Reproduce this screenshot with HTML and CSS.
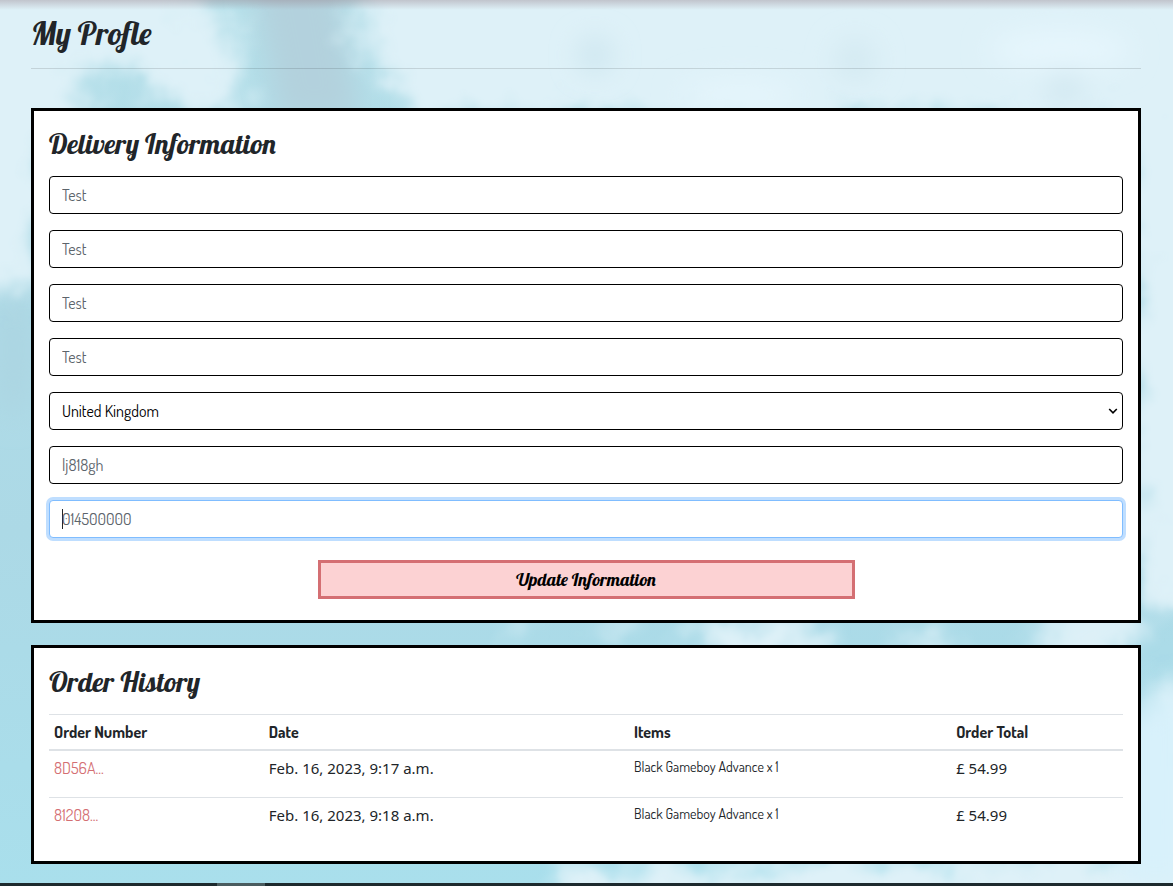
FILE: index.html
```html
<!DOCTYPE html>
<html lang="en">
<head>
<meta charset="utf-8">
<meta name="viewport" content="width=device-width, initial-scale=1">
<title>My Profle</title>
<link rel="stylesheet" href="styles.css">
</head>
<body>
<svg class="sky" viewBox="0 0 1173 886" preserveAspectRatio="none" aria-hidden="true">
  <defs>
    <linearGradient id="base" x1="0" y1="0" x2="0" y2="1">
      <stop offset="0" stop-color="#b4dfe9"/>
      <stop offset="0.6" stop-color="#acd9e6"/>
      <stop offset="1" stop-color="#a9dfec"/>
    </linearGradient>
    <filter id="cloud" x="-10%" y="-10%" width="120%" height="120%">
      <feGaussianBlur stdDeviation="11" result="b"/>
      <feTurbulence type="fractalNoise" baseFrequency="0.022" numOctaves="5" seed="4" result="n"/>
      <feDisplacementMap in="b" in2="n" scale="60" xChannelSelector="R" yChannelSelector="G"/>
      <feGaussianBlur stdDeviation="2"/>
    </filter>
    <filter id="soft" x="-50%" y="-50%" width="200%" height="200%">
      <feGaussianBlur stdDeviation="14"/>
    </filter>
  </defs>
  <rect width="1173" height="886" fill="url(#base)"/>
  <g filter="url(#soft)">
    <path d="M250-30H335L360 120H280Z" fill="#b3d1dd"/>
    <ellipse cx="14" cy="350" rx="20" ry="70" fill="#acd5e2"/>
  </g>
  <g filter="url(#cloud)" fill="#def1f8">
    <path d="M-40-40H180L205 20 240 30 225 55 215 110H180L150 75 125 70H75L90 125H60L40 150 30 290H-40Z"/>
    <ellipse cx="232" cy="85" rx="14" ry="22"/>
    <path d="M370-40H1240V620H1175L1130 560V120H400L400 85 355 40Z"/>
    <path d="M1150 690H1240V940H560V868L1150 850Z"/>
    <ellipse cx="755" cy="640" rx="70" ry="26"/>
    <ellipse cx="1090" cy="635" rx="55" ry="24"/>
    <ellipse cx="925" cy="647" rx="22" ry="14"/>
    <ellipse cx="513" cy="622" rx="10" ry="10"/>
    <ellipse cx="613" cy="622" rx="12" ry="10"/>
  </g>
  <g filter="url(#soft)">
    <ellipse cx="595" cy="55" rx="16" ry="16" fill="#cae4ed"/>
    <ellipse cx="855" cy="60" rx="20" ry="20" fill="#d3e9f1"/>
    <ellipse cx="1060" cy="50" rx="70" ry="20" fill="#e6f6fd"/>
    <ellipse cx="740" cy="95" rx="60" ry="16" fill="#e5f5fc"/>
    <ellipse cx="1065" cy="88" rx="18" ry="14" fill="#cee5ee"/>
    <path d="M1120 886V720L1190 680V886Z" fill="#d8f1fb"/>
  </g>
</svg>
<main class="page">
  <header class="page-header">
    <h1 class="page-title">My Profle</h1>
  </header>

  <section class="panel">
    <h2 class="panel-title">Delivery Information</h2>
    <form class="form">
      <input class="field" type="text" placeholder="Test" aria-label="Street address 1">
      <input class="field" type="text" placeholder="Test" aria-label="Street address 2">
      <input class="field" type="text" placeholder="Test" aria-label="Town or city">
      <input class="field" type="text" placeholder="Test" aria-label="County">
      <div class="select-wrap">
        <select class="field field-select" aria-label="Country">
          <option>United Kingdom</option>
        </select>
        <svg class="chevron" viewBox="0 0 10 10" aria-hidden="true"><path d="M1.2 3 5 6.8 8.8 3"/></svg>
      </div>
      <input class="field" type="text" placeholder="lj818gh" aria-label="Postcode">
      <input class="field" type="text" placeholder="014500000" aria-label="Phone number" autofocus>
      <button class="submit" type="button">Update Information</button>
    </form>
  </section>

  <section class="panel panel-history">
    <h2 class="panel-title">Order History</h2>
    <table class="orders">
      <thead>
        <tr>
          <th class="col-number">Order Number</th>
          <th class="col-date">Date</th>
          <th class="col-items">Items</th>
          <th>Order Total</th>
        </tr>
      </thead>
      <tbody>
        <tr>
          <td><a class="order-link" href="#">8D56A...</a></td>
          <td>Feb. 16, 2023, 9:17 a.m.</td>
          <td><ul class="items"><li>Black Gameboy Advance x 1</li></ul></td>
          <td>£ 54.99</td>
        </tr>
        <tr>
          <td><a class="order-link" href="#">81208...</a></td>
          <td>Feb. 16, 2023, 9:18 a.m.</td>
          <td><ul class="items"><li>Black Gameboy Advance x 1</li></ul></td>
          <td>£ 54.99</td>
        </tr>
      </tbody>
    </table>
  </section>
</main>
<footer class="bottom-bar"><span class="bottom-tab"></span></footer>
</body>
</html>
```

FILE: styles.css
```css
* {
  box-sizing: border-box;
}

body {
  margin: 0;
  min-height: 100vh;
  display: flex;
  flex-direction: column;
  background: #b4dfe9;
  color: #212529;
  font: 15px/24px "Noto Sans", sans-serif;
}

/* Cloud backdrop behind the whole page */
.sky {
  position: absolute;
  inset: 0;
  width: 100%;
  height: 100%;
  z-index: -1;
}

.page {
  flex: 1;
  padding: 0 32px 0 31px;
  background: linear-gradient(rgba(150, 130, 140, 0.4), rgba(150, 130, 140, 0)) top / 100% 10px no-repeat;
}

.page-header {
  padding: 14px 0 16px;
  border-bottom: 1px solid rgba(0, 0, 0, 0.12);
}

.page-title,
.panel-title {
  margin: 0;
  font-family: Lobster, "Liberation Serif", serif;
  font-weight: 500;
}

.page-title {
  font-size: 32px;
  line-height: 38px;
}

.panel {
  margin-top: 39px;
  padding: 16px 15px 21px;
  background: #fff;
  border: 3px solid #000;
}

.panel-history {
  margin-top: 22px;
  padding: 17px 15px;
}

.panel-title {
  font-size: 28px;
  line-height: 34px;
}

.form {
  display: flex;
  flex-direction: column;
  gap: 16px;
  margin-top: 15px;
}

.field {
  display: block;
  width: 100%;
  height: 38px;
  padding: 6px 12px;
  color: #000;
  background: #fff;
  border: 1px solid #000;
  border-radius: 4px;
  font: 16px/24px Dosis, Lato, sans-serif;
}

.field::placeholder {
  color: #5c646b;
  opacity: 1;
}

.field:focus {
  outline: 0;
  border-color: #80bdff;
  box-shadow: 0 0 0 3px #bfdeff;
  caret-color: transparent;
  background: linear-gradient(#212529, #212529) 12px center / 1px 20px no-repeat #fff;
}

.select-wrap {
  position: relative;
}

.field-select {
  appearance: none;
}

.chevron {
  position: absolute;
  top: 14px;
  right: 5px;
  width: 10px;
  height: 10px;
  fill: none;
  stroke: #000;
  stroke-width: 1.6;
  pointer-events: none;
}

.submit {
  align-self: center;
  width: 50%;
  height: 39px;
  margin-top: 6px;
  padding: 0;
  color: #000;
  background: #fcd2d3;
  border: 3px solid #d46f73;
  font: 18px/24px Lobster, "Liberation Serif", serif;
}

.orders {
  width: 100%;
  margin-top: 15px;
  border-collapse: collapse;
  table-layout: fixed;
}

.orders th,
.orders td {
  padding: 5px;
  text-align: left;
  vertical-align: top;
  border-top: 1px solid #dee2e6;
}

.orders th {
  border-bottom: 2px solid #dee2e6;
  font: 700 16px/24px Dosis, Lato, sans-serif;
}

.orders td {
  height: 47px;
}

.col-number {
  width: 20%;
}

.col-date {
  width: 34%;
}

.col-items {
  width: 30%;
}

.order-link {
  color: #d46f73;
  font-family: Dosis, Lato, sans-serif;
  font-size: 16px;
  text-decoration: none;
}

.items {
  margin: 0;
  padding: 0;
  list-style: none;
  font: 14px/21px Dosis, Lato, sans-serif;
}

.bottom-bar {
  display: flex;
  height: 3px;
  background: #1d2a2e;
}

.bottom-tab {
  width: 48px;
  margin-left: 217px;
  background: #4a5c5f;
}
```
